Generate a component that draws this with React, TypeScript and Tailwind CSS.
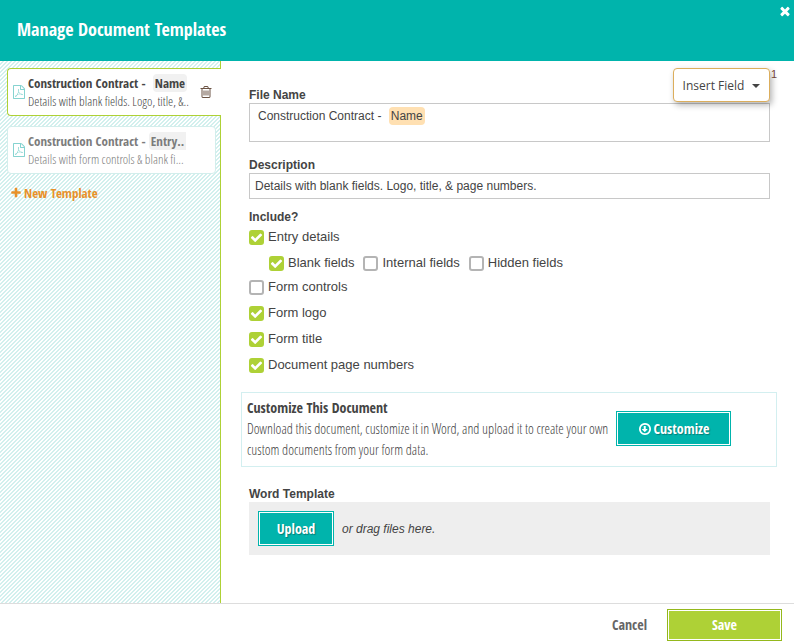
import { useState } from 'react';

const ICONS = {
  times:
    'M1490 1322q0 40-28 68l-136 136q-28 28-68 28t-68-28l-294-294-294 294q-28 28-68 28t-68-28l-136-136q-28-28-28-68t28-68l294-294-294-294q-28-28-28-68t28-68l136-136q28-28 68-28t68 28l294 294 294-294q28-28 68-28t68 28l136 136q28 28 28 68t-28 68l-294 294 294 294q28 28 28 68z',
  plus:
    'M1600 736v192q0 40-28 68t-68 28h-416v416q0 40-28 68t-68 28h-192q-40 0-68-28t-28-68v-416h-416q-40 0-68-28t-28-68v-192q0-40 28-68t68-28h416v-416q0-40 28-68t68-28h192q40 0 68 28t28 68v416h416q40 0 68 28t28 68z',
  check:
    'M1671 566q0 40-28 68l-724 724-136 136q-28 28-68 28t-68-28l-136-136-362-362q-28-28-28-68t28-68l136-136q28-28 68-28t68 28l294 295 656-657q28-28 68-28t68 28l136 136q28 28 28 68z',
  trash:
    'M704 736v576q0 14-9 23t-23 9h-64q-14 0-23-9t-9-23v-576q0-14 9-23t23-9h64q14 0 23 9t9 23zm256 0v576q0 14-9 23t-23 9h-64q-14 0-23-9t-9-23v-576q0-14 9-23t23-9h64q14 0 23 9t9 23zm256 0v576q0 14-9 23t-23 9h-64q-14 0-23-9t-9-23v-576q0-14 9-23t23-9h64q14 0 23 9t9 23zm128 724v-948h-896v948q0 22 7 40.500t14.500 27 10.500 8.500h832q3 0 10.500-8.500t14.500-27 7-40.500zm-672-1076h448l-48-117q-7-9-17-11h-317q-10 2-17 11zm928 32v64q0 14-9 23t-23 9h-96v948q0 83-47 143.500t-113 60.500h-832q-66 0-113-58.500t-47-141.500v-952h-96q-14 0-23-9t-9-23v-64q0-14 9-23t23-9h309l70-167q15-37 54-63t79-26h320q40 0 79 26t54 63l70 167h309q14 0 23 9t9 23z',
  pdf:
    'M1596 380q28 28 48 76t20 88v1152q0 40-28 68t-68 28h-1344q-40 0-68-28t-28-68v-1600q0-40 28-68t68-28h896q40 0 88 20t76 48zm-444-244v376h376q-10-29-22-41l-313-313q-12-12-41-22zm384 1528v-1024h-416q-40 0-68-28t-28-68v-416h-768v1536h1280zm-514-593q33 26 84 56 59-7 117-7 147 0 177 49 16 22 2 52 0 1-1 2l-2 2v1q-6 38-71 38-48 0-115-20t-130-53q-221 24-392 83-153 262-242 262-15 0-28-7l-24-12q-1-1-6-5-10-10-6-36 9-40 56-91.500t132-96.500q14-9 23 6 2 2 2 4 52-85 107-197 68-136 104-262-24-82-30.500-159.500t6.500-127.500q11-40 42-40h22q23 0 35 15 18 21 9 68-2 6-4 8 1 3 1 8v30q-2 123-14 192 55 164 146 238zm-576 411q52-24 137-158-51 40-87.500 84t-49.500 74zm398-920q-15 42-2 132 1-7 7-44 0-3 7-43 1-4 4-8-1-1-1-2-1-2-1-3-1-22-13-36 0 1-1 2v2zm-124 661q135-54 284-81-2-1-13-9.500t-16-13.500q-76-67-127-176-27 86-83 197-30 56-45 83zm646-16q-24-24-140-24 76 28 124 28 14 0 18-1 0-1-2-3z',
  download:
    'M1216 928q0 14-10 24l-319 319q-10 9-23 9t-23-9l-320-320q-9-9-9-23 0-13 9.500-22.500t22.500-9.500h192v-352q0-13 9.500-22.500t22.500-9.500h192q13 0 22.500 9.500t9.500 22.500v352h192q14 0 23 9t9 23zM896 352q-148 0-273 73t-198 198-73 273 73 273 198 198 273 73 273-73 198-198 73-273-73-273-198-198-273-73zm768 544q0 209-103 385.500t-279.500 279.500-385.500 103-385.500-103-279.500-279.500-103-385.500 103-385.500 279.500-279.500 385.500-103 385.500 103 279.500 279.500 103 385.500z',
};

interface IconProps {
  name: keyof typeof ICONS;
  className?: string;
}

const Icon = ({ name, className }: IconProps) => (
  <svg viewBox="0 0 1792 1792" fill="currentColor" aria-hidden="true" className={className}>
    <path d={ICONS[name]} />
  </svg>
);

interface CheckProps {
  label: string;
  defaultChecked?: boolean;
}

const Check = ({ label, defaultChecked = false }: CheckProps) => {
  const [checked, setChecked] = useState(defaultChecked);
  return (
    <label className="flex h-6 items-center gap-1 text-[13px]">
      <span className="grid size-[15px] place-items-center">
        <input
          type="checkbox"
          checked={checked}
          onChange={e => setChecked(e.target.checked)}
          className="col-start-1 row-start-1 size-[15px] appearance-none rounded-[3px] border-2 border-[#b4b4b4] bg-white checked:border-[#aed136] checked:bg-[#aed136]"
        />
        {checked && <Icon name="check" className="pointer-events-none col-start-1 row-start-1 size-[13px] text-white" />}
      </span>
      {label}
    </label>
  );
};

export default function App() {
  return (
    <div className="flex min-h-screen flex-col bg-white font-['Liberation_Sans',Arial,sans-serif] text-xs text-[#444]">
      <header className="relative flex h-[61px] items-center bg-[#00b4ac] px-[17px] pb-1">
        <h1 className="font-['Open_Sans_Condensed','Open_Sans',sans-serif] text-lg font-bold text-white">
          Manage Document Templates
        </h1>
        <button type="button" aria-label="Close" className="absolute top-1 right-0.5 text-white">
          <Icon name="times" className="size-[14px]" />
        </button>
      </header>

      <div className="flex flex-1">
        <aside className="w-[221px] shrink-0 border-r border-[#aed136] bg-[linear-gradient(135deg,#fff_25%,#d2f0ee_25%,#d2f0ee_50%,#fff_50%,#fff_75%,#d2f0ee_75%)] bg-[size:4px_4px] pt-[7px] pl-[7px] font-['Open_Sans_Condensed_Light','Open_Sans',sans-serif] text-[13px]">
          <div className="-mr-px flex h-12 items-center rounded-l border border-r-0 border-[#aed136] bg-white pr-2 pl-1">
            <Icon name="pdf" className="size-[14px] shrink-0 text-[#85d3d0]" />
            <div className="ml-0.5 w-[166px] leading-[18px]">
              <div className="font-['Open_Sans_Condensed','Open_Sans',sans-serif] font-bold whitespace-nowrap">
                Construction Contract - <span className="ml-1 inline-block rounded bg-[#f1f1f1] px-0.5">Name</span>
              </div>
              <div className="whitespace-nowrap">Details with blank fields. Logo, title, &amp;..</div>
            </div>
            <button type="button" aria-label="Delete template" className="ml-1.5 text-[#6b5344]">
              <Icon name="trash" className="size-[14px]" />
            </button>
          </div>

          <div className="mt-2.5 mr-1 flex h-12 items-center rounded border border-[#d3eeec] bg-white pl-1 text-[#7c7c7c]">
            <Icon name="pdf" className="size-[14px] shrink-0 text-[#85d3d0]" />
            <div className="ml-0.5 w-[166px] leading-[18px]">
              <div className="font-['Open_Sans_Condensed','Open_Sans',sans-serif] font-bold whitespace-nowrap">
                Construction Contract - <span className="inline-block rounded-l bg-[#f1f1f1] px-0.5">Entry..</span>
              </div>
              <div className="whitespace-nowrap">Details with form controls &amp; blank fi...</div>
            </div>
          </div>

          <button
            type="button"
            className="mt-2.5 ml-[3px] flex items-center gap-0.5 font-['Open_Sans_Condensed','Open_Sans',sans-serif] leading-[18px] font-bold text-[#e8912a]"
          >
            <Icon name="plus" className="size-[12px]" />
            New Template
          </button>
        </aside>

        <main className="relative min-w-0 flex-1 pt-[26px] pr-6 pb-12 pl-7">
          <span className="absolute top-1.5 right-[17px] text-[11px] leading-[14px] text-[#7a4a3a]">1</span>
          <button
            type="button"
            className="absolute top-[7px] right-6 flex h-[34px] w-[97px] items-center justify-center gap-2 rounded-sm border border-[#dcae5c] bg-white pt-0.5 font-['Open_Sans',sans-serif] shadow-[2px_3px_6px_rgba(0,0,0,0.3)]"
          >
            Insert Field
            <svg viewBox="0 0 8 4" fill="currentColor" aria-hidden="true" className="h-1 w-2">
              <path d="M0 0h8L4 4z" />
            </svg>
          </button>

          <div id="file-name" className="leading-4 font-bold">File Name</div>
          <div
            role="textbox"
            aria-labelledby="file-name"
            contentEditable
            suppressContentEditableWarning
            className="h-[39px] border border-[#c8c8c8] px-2 pt-[3px] leading-[18px]"
          >
            Construction Contract - <span className="ml-1 inline-block rounded bg-[#ffe0b2] px-0.5">Name</span>
          </div>

          <label htmlFor="description" className="mt-[15px] block leading-4 font-bold">Description</label>
          <input
            id="description"
            type="text"
            defaultValue="Details with blank fields. Logo, title, & page numbers."
            className="block h-[26px] w-full border border-[#c8c8c8] px-[5px]"
          />

          <fieldset className="mt-2.5">
            <legend className="leading-4 font-bold">Include?</legend>
            <Check label="Entry details" defaultChecked />
            <div className="mt-0.5 ml-5 flex gap-[9px]">
              <Check label="Blank fields" defaultChecked />
              <Check label="Internal fields" />
              <Check label="Hidden fields" />
            </div>
            <Check label="Form controls" />
            <div className="mt-0.5 flex flex-col gap-0.5">
              <Check label="Form logo" defaultChecked />
              <Check label="Form title" defaultChecked />
              <Check label="Document page numbers" defaultChecked />
            </div>
          </fieldset>

          <section className="mt-[15px] -mr-[7px] -ml-2 flex items-center gap-1 border border-[#d3eff0] pt-1 pr-[45px] pb-1.5 pl-[5px] font-['Open_Sans_Condensed_Light','Open_Sans',sans-serif] text-sm leading-[21px]">
            <div className="flex-1">
              <h2 className="font-['Open_Sans_Condensed','Open_Sans',sans-serif] font-bold">Customize This Document</h2>
              <p>
                Download this document, customize it in Word, and upload it to create your own custom documents from your
                form data.
              </p>
            </div>
            <button
              type="button"
              className="flex h-[35px] w-[115px] shrink-0 items-center justify-center gap-0.5 border border-[#00b4ac] bg-[#00b4ac] font-['Open_Sans_Condensed','Open_Sans',sans-serif] font-bold text-white shadow-[inset_0_0_0_1px_#fff] text-shadow-[1px_1px_1px_rgba(0,0,0,0.3)]"
            >
              <Icon name="download" className="size-[14px]" />
              Customize
            </button>
          </section>

          <h3 className="mt-[19px] leading-4 font-bold">Word Template</h3>
          <div className="flex h-[53px] items-center gap-2 bg-[#eee] px-[9px]">
            <button
              type="button"
              className="h-[35px] w-[76px] border border-[#00b4ac] bg-[#00b4ac] font-['Open_Sans_Condensed','Open_Sans',sans-serif] text-sm font-bold text-white shadow-[inset_0_0_0_1px_#fff] text-shadow-[1px_1px_1px_rgba(0,0,0,0.3)]"
            >
              Upload
            </button>
            <em>or drag files here.</em>
          </div>
        </main>
      </div>

      <footer className="flex items-center justify-end gap-5 border-t border-[#ddd] pt-[5px] pr-3 pb-[3px] font-['Open_Sans_Condensed','Open_Sans',sans-serif] text-sm font-bold">
        <button type="button" className="text-[#666]">Cancel</button>
        <button
          type="button"
          className="h-8 w-[115px] border border-[#94b81c] bg-[#aed136] text-white shadow-[inset_0_0_0_1px_#fff]"
        >
          Save
        </button>
      </footer>
    </div>
  );
}
